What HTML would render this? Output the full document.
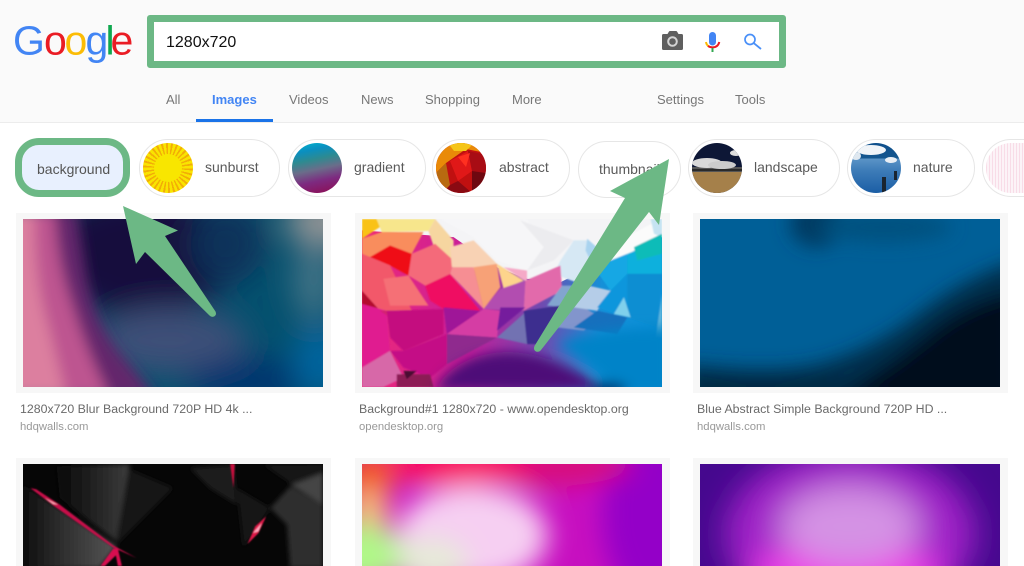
<!DOCTYPE html>
<html><head><meta charset="utf-8"><title>1280x720 - Google Images</title>
<style>
html,body{margin:0;padding:0;background:#fff;height:566px;overflow:hidden;}
body{width:1024px;position:relative;font-family:"Liberation Sans",Arial,sans-serif;}
#root{position:absolute;left:0;top:0;width:1024px;height:566px;overflow:hidden;contain:paint;}
.a{position:absolute;}
#hdr{left:0;top:0;width:1024px;height:122px;background:#fafafa;border-bottom:1px solid #ececec;}
#search{left:147px;top:15px;width:625px;height:39px;border:7px solid #6cb885;border-radius:3px;background:#fff;}
.q{left:166px;top:34px;font-size:16px;line-height:18px;color:#111;}
.n{top:92px;font-size:13px;line-height:16px;color:#777;white-space:nowrap;}
.chip{top:139px;height:56px;border:1px solid #e6e6e6;border-radius:29px;background:#fff;box-sizing:content-box;}
.chip span{position:absolute;top:19px;font-size:14px;line-height:17px;color:#5a5a5a;white-space:nowrap;}
.th{position:absolute;top:3px;width:50px;height:50px;border-radius:50%;overflow:hidden;}
.card{background:#f7f7f7;width:315px;height:180px;}
.t{top:402px;font-size:12.35px;line-height:14px;color:#6a6a6a;white-space:nowrap;}
.s{top:419.5px;font-size:11.3px;line-height:14px;color:#999;white-space:nowrap;}
svg{display:block;}
</style></head><body>
<div id="root">

<div class="a" id="hdr"></div>

<svg class="a" style="left:0;top:0" width="140" height="70">
<g font-family="Liberation Sans, sans-serif" font-size="41">
<text x="13" y="54.5" fill="#4285f4">G</text>
<text x="44" y="54.5" fill="#ea1c24">o</text>
<text x="64.5" y="54.5" fill="#fbbc05">o</text>
<text x="85.5" y="54.5" fill="#4285f4">g</text>
<text x="105.5" y="54.5" fill="#0fa84f">l</text>
<text x="110.5" y="54.5" fill="#ea1c24">e</text>
</g></svg>

<div class="a" id="search"></div>
<div class="a q">1280x720</div>

<svg class="a" style="left:655px;top:25px" width="115" height="32" viewBox="0 0 115 32">
<!-- camera -->
<path d="M8.5 9H12.5L14 6.5Q14.4 6 15 6H21Q21.6 6 22 6.5L23.5 9H26.5Q28 9 28 10.5V23.5Q28 25 26.5 25H8.5Q7 25 7 23.5V10.5Q7 9 8.5 9Z" fill="#5f5f5f"/>
<circle cx="17.5" cy="16.5" r="4.3" fill="#5f5f5f" stroke="#d4d4d4" stroke-width="2"/>
<!-- mic -->
<rect x="54" y="7" width="7" height="13.5" rx="3.5" fill="#4285f4"/>
<path d="M51 17q.4 3 3 4.6" fill="none" stroke="#fbbc05" stroke-width="2"/>
<path d="M53 21q2 1.4 4.5 1.4q5.4 0 6.8-5.4" fill="none" stroke="#ea1c24" stroke-width="2"/>
<rect x="56.5" y="23" width="2" height="4" fill="#34a853"/>
<!-- search -->
<circle cx="95" cy="14.5" r="5" fill="none" stroke="#4a90f8" stroke-width="1.7"/>
<path d="M99 18.3L106 24" fill="none" stroke="#4a90f8" stroke-width="1.8"/>
</svg>

<div class="a n" style="left:166px">All</div>
<div class="a n" style="left:212px;color:#4285f4;font-weight:bold">Images</div>
<div class="a n" style="left:289px">Videos</div>
<div class="a n" style="left:361px">News</div>
<div class="a n" style="left:425px">Shopping</div>
<div class="a n" style="left:512px">More</div>
<div class="a n" style="left:657px">Settings</div>
<div class="a n" style="left:735px">Tools</div>
<div class="a" style="left:196px;top:119px;width:77px;height:3px;background:#1a73e8"></div>

<!-- chips -->
<div class="a" style="left:15px;top:138px;width:101px;height:45px;border:7px solid #6cb885;border-radius:24px;background:#e8f0fe"></div>
<div class="a" style="left:37px;top:161px;font-size:14px;line-height:17px;color:#555">background</div>

<div class="a chip" style="left:139px;width:139px">
 <div class="th" style="left:3px;background:repeating-conic-gradient(#f9e400 0 7deg,#f2ae06 7deg 12deg)"><div style="position:absolute;left:11px;top:11px;width:28px;height:28px;border-radius:50%;background:#f8e600"></div></div>
 <span style="left:65px">sunburst</span></div>
<div class="a chip" style="left:288px;width:136px">
 <div class="th" style="left:3px;background:linear-gradient(168deg,#00b8cf 0%,#0a8fc0 18%,#2e8a90 35%,#6a6d8a 52%,#7d2a80 72%,#8e0b50 100%)"></div>
 <span style="left:65px">gradient</span></div>
<div class="a chip" style="left:432px;width:136px">
 <div class="th" style="left:3px;background:#c01010"><svg width="50" height="50"><polygon points="0,0 50,0 50,10 30,6 10,20 0,30" fill="#e98a08"/><polygon points="12,0 38,0 30,8 18,8" fill="#f5c518"/><polygon points="0,30 10,20 14,42 6,50 0,50" fill="#b86a10"/><polygon points="14,18 32,8 36,28 22,38" fill="#e01818"/><polygon points="32,8 50,12 50,30 36,28" fill="#a80c14"/><polygon points="14,42 22,38 36,50 8,50" fill="#8a0a12"/><polygon points="36,28 50,30 50,50 36,50" fill="#6e0810"/><polygon points="22,14 34,10 30,24" fill="#ff3020"/></svg></div>
 <span style="left:66px">abstract</span></div>
<div class="a chip" style="left:578px;top:141px;height:55px;width:101px"><span style="left:20px;top:19px">thumbnail</span></div>
<div class="a chip" style="left:688px;width:150px">
 <div class="th" style="left:3px;background:#0d1736"><svg width="50" height="50"><rect y="24" width="50" height="6" fill="#555"/><rect y="29" width="50" height="21" fill="#a5804a"/><ellipse cx="15" cy="20" rx="15" ry="5" fill="#d8d8d8"/><ellipse cx="30" cy="22" rx="14" ry="4" fill="#ccc"/><ellipse cx="44" cy="10" rx="6" ry="3" fill="#ddd"/><rect y="26" width="50" height="2" fill="#2a2a2a"/></svg></div>
 <span style="left:65px">landscape</span></div>
<div class="a chip" style="left:847px;width:126px">
 <div class="th" style="left:3px;background:linear-gradient(#0e4f8c 0,#14568f 30%,#5a93c6 32%,#3d7cb8 55%,#1b5ea5 100%)"><svg width="50" height="50"><ellipse cx="20" cy="7" rx="15" ry="5" fill="#f0f4f8"/><ellipse cx="40" cy="17" rx="6" ry="3" fill="#e8eef4"/><ellipse cx="5" cy="13" rx="5" ry="4" fill="#dfe8f0"/><rect x="31" y="34" width="4" height="16" fill="#1a2530"/><rect x="43" y="28" width="3" height="9" fill="#1a2530"/></svg></div>
 <span style="left:65px">nature</span></div>
<div class="a chip" style="left:982px;width:41px;border-right:0;border-radius:29px 0 0 29px">
 <div class="th" style="left:3px;width:38px;border-radius:25px 0 0 25px;background:#fbeef3;background-image:repeating-linear-gradient(90deg,#f8dce7 0 1px,#fcf3f7 1px 3px)"></div></div>

<!-- cards -->
<div class="a card" style="left:16px;top:213px"></div>
<div class="a card" style="left:355px;top:213px"></div>
<div class="a card" style="left:693px;top:213px"></div>
<div class="a card" style="left:16px;top:458px;height:108px"></div>
<div class="a card" style="left:355px;top:458px;height:108px"></div>
<div class="a card" style="left:693px;top:458px;height:108px"></div>

<!-- image 1 -->
<svg class="a" style="left:23px;top:219px" width="300" height="168" viewBox="40 26 898 502" preserveAspectRatio="none">
<defs><filter id="b1" x="-40%" y="-40%" width="180%" height="180%"><feGaussianBlur stdDeviation="46"/></filter>
<filter id="b1s" x="-30%" y="-30%" width="160%" height="160%"><feGaussianBlur stdDeviation="20"/></filter>
<clipPath id="c1"><rect x="40" y="26" width="898" height="502"/></clipPath></defs>
<g clip-path="url(#c1)">
<rect x="40" y="26" width="898" height="502" fill="#04506e"/>
<g filter="url(#b1)">
<ellipse cx="390" cy="130" rx="290" ry="190" fill="#120f3c"/>
<ellipse cx="650" cy="100" rx="110" ry="120" fill="#08305a"/>
<ellipse cx="480" cy="390" rx="230" ry="100" fill="#3e5078"/>
<ellipse cx="720" cy="510" rx="190" ry="70" fill="#03346e"/>
<ellipse cx="930" cy="450" rx="80" ry="110" fill="#01659f"/>
<ellipse cx="950" cy="30" rx="130" ry="70" fill="#979797"/>
<ellipse cx="910" cy="210" rx="60" ry="120" fill="#447587"/>
</g>
<g filter="url(#b1s)">
<path d="M-20 0H200L225 160Q250 340 350 450L440 560H-20Z" fill="#64256c"/>
<path d="M-20 0H135Q140 150 190 290Q230 420 300 560H-20Z" fill="#bd5590"/>
<path d="M-20 0H75Q70 200 120 360L170 560H-20Z" fill="#dc7f9f"/>
</g></g></svg>

<!-- image 2 -->
<svg class="a" style="left:362px;top:219px" width="300" height="168" viewBox="66 26 898 502" preserveAspectRatio="none">
<defs><filter id="b2" x="-5%" y="-5%" width="110%" height="110%"><feGaussianBlur stdDeviation="2.6"/></filter>
<filter id="b2l" x="-20%" y="-20%" width="140%" height="140%"><feGaussianBlur stdDeviation="18"/></filter>
<linearGradient id="g2" x1="0" x2="1" y1="0" y2="0"><stop offset="0" stop-color="#ee2a78"/><stop offset=".35" stop-color="#c81e9a"/><stop offset=".6" stop-color="#6f4bb0"/><stop offset=".8" stop-color="#1590d8"/><stop offset="1" stop-color="#0a90d8"/></linearGradient>
<clipPath id="c2"><rect x="66" y="26" width="898" height="502"/></clipPath></defs>
<g clip-path="url(#c2)">
<rect x="66" y="26" width="898" height="502" fill="#f4f4f6"/>
<polygon points="66,60 340,80 470,170 560,205 660,215 760,165 964,80 964,528 66,528" fill="url(#g2)"/>
<g filter="url(#b2)">
<polygon points="300,26 560,26 610,110 560,180 470,150 400,80" fill="#f6f6f8"/>
<polygon points="540,30 610,110 560,180 640,150 700,90" fill="#ececef"/>
<polygon points="700,90 740,90 780,120 720,220 640,190 660,150" fill="#d6e8f4"/>
<polygon points="780,120 960,26 960,70 820,160" fill="#fbfbfb"/>
<polygon points="740,85 780,120 750,150 735,120" fill="#a9d3ef"/>
<polygon points="930,26 964,26 964,80 940,70" fill="#c5e3f2"/>
<polygon points="66,26 110,26 120,50 66,85" fill="#f9c213"/>
<polygon points="110,26 285,26 265,62 125,65" fill="#f7e68c"/>
<polygon points="285,26 340,90 340,150 285,120 265,62" fill="#f6d6a0"/>
<polygon points="66,85 125,65 250,65 215,130 150,105 90,140 66,130" fill="#f98d5d"/>
<polygon points="90,140 150,105 215,130 205,195 150,165" fill="#ef1017"/>
<polygon points="66,130 90,140 150,165 215,300 120,300 66,240" fill="#f2596a"/>
<polygon points="130,205 205,195 265,285 150,285" fill="#f56f76"/>
<polygon points="66,240 120,300 66,280" fill="#b40e2e"/>
<polygon points="215,130 285,100 340,150 330,190 255,225 205,195" fill="#f46a7a"/>
<polygon points="255,225 330,190 420,300 310,295 270,270" fill="#ef0f62"/>
<polygon points="330,110 400,90 470,160 420,180 335,170" fill="#f8d2b4"/>
<polygon points="335,170 400,170 430,295 330,190" fill="#f68e93"/>
<polygon points="400,170 470,160 480,230 430,295" fill="#f7a177"/>
<polygon points="470,160 550,210 490,235" fill="#fdd48c"/>
<polygon points="490,170 560,180 560,215" fill="#f5a9c7"/>
<polygon points="480,235 555,210 550,300 430,295" fill="#b24eb0"/>
<polygon points="555,210 660,165 665,240 550,300" fill="#e26aab"/>
<polygon points="665,225 720,225 700,290 620,285" fill="#82a5cf"/>
<polygon points="66,280 140,300 150,420 66,470" fill="#e01f90"/>
<polygon points="120,300 140,300 215,300 150,320" fill="#d3206f"/>
<polygon points="140,300 310,295 310,370 190,420 150,380" fill="#c4107f"/>
<polygon points="310,290 420,300 320,370" fill="#9f1298"/>
<polygon points="320,370 430,295 480,300 470,380" fill="#d53da4"/>
<polygon points="320,370 470,380 320,460" fill="#8f2c8e"/>
<polygon points="470,380 560,300 560,400" fill="#7272b2"/>
<polygon points="480,290 555,290 470,360" fill="#741b9d"/>
<polygon points="550,300 660,285 600,400 560,400" fill="#3c2f8f"/>
<polygon points="66,470 150,420 190,500 130,528 66,528" fill="#d767a8"/>
<polygon points="150,420 190,420 320,370 320,460 270,500 190,470" fill="#c40d86"/>
<polygon points="170,490 270,490 280,528 170,528" fill="#8c1a55"/>
<polygon points="190,480 230,480 200,505" fill="#4a1030"/>
<polygon points="660,280 730,290 780,320 730,360 650,350" fill="#8295cc"/>
<polygon points="720,220 810,240 770,300 700,290" fill="#b5cde8"/>
<polygon points="760,170 860,130 860,220 810,240" fill="#12a7e4"/>
<polygon points="860,130 964,90 964,190 860,190" fill="#0bb0dd"/>
<polygon points="880,110 964,70 964,130 890,150" fill="#0cbcb8"/>
<polygon points="860,190 964,190 950,350 860,320" fill="#0c8ed2"/>
<polygon points="810,240 860,190 860,320 770,290" fill="#0a96dc"/>
<polygon points="850,260 870,320 820,310" fill="#7fd0ec"/>
<polygon points="770,300 860,320 830,370 700,350" fill="#1470bd"/>
<polygon points="964,250 964,380 945,380" fill="#5fb5dc"/>
</g>
<g filter="url(#b2l)">
<path d="M280 540Q340 440 470 425Q620 410 800 540Z" fill="#4d0a78"/>
<path d="M650 400Q780 350 990 350V550H830Q750 450 650 400Z" fill="#0683c8"/>
<ellipse cx="800" cy="535" rx="60" ry="20" fill="#062a6a"/>
</g></g></svg>

<!-- image 3 -->
<svg class="a" style="left:700px;top:219px" width="300" height="168" viewBox="46 26 899 502" preserveAspectRatio="none">
<defs><filter id="b3" x="-30%" y="-30%" width="160%" height="160%"><feGaussianBlur stdDeviation="28"/></filter>
<clipPath id="c3"><rect x="46" y="26" width="899" height="502"/></clipPath></defs>
<g clip-path="url(#c3)"><rect x="46" y="26" width="899" height="502" fill="#005f97"/>
<g filter="url(#b3)">
<ellipse cx="395" cy="40" rx="80" ry="70" fill="#023a62"/>
<ellipse cx="600" cy="50" rx="200" ry="45" fill="#02517f"/>
<path d="M0 460Q260 490 400 460Q560 420 700 310Q840 200 1000 150V600H0Z" fill="#012f4c"/>
<path d="M440 570Q620 460 740 360Q850 270 1000 240V600Z" fill="#010f1c"/>
<path d="M0 510H460V570H0Z" fill="#012740"/>
</g></g></svg>

<!-- image 4 -->
<svg class="a" style="left:23px;top:464px" width="300" height="102" viewBox="40 28 898 306" preserveAspectRatio="none">
<defs><filter id="b4" x="-20%" y="-20%" width="140%" height="140%"><feGaussianBlur stdDeviation="7"/></filter><filter id="b4r" x="-20%" y="-20%" width="140%" height="140%"><feGaussianBlur stdDeviation="2"/></filter>
<linearGradient id="g4a" x1="0" x2="1" y1="0" y2="0"><stop offset="0" stop-color="#070707"/><stop offset="1" stop-color="#3c3c3c"/></linearGradient>
<linearGradient id="g4b" x1="0" x2="1" y1="0" y2="0"><stop offset="0" stop-color="#0c0c0c"/><stop offset=".3" stop-color="#262626"/><stop offset="1" stop-color="#555"/></linearGradient>
<clipPath id="c4"><rect x="40" y="28" width="898" height="306"/></clipPath></defs>
<g clip-path="url(#c4)"><rect x="40" y="28" width="898" height="306" fill="#060606"/>
<g filter="url(#b4)">
<polygon points="140,35 360,28 320,260 240,200 150,130" fill="url(#g4a)"/>
<polygon points="360,45 490,100 320,270" fill="#161616"/>
<polygon points="40,90 320,275 270,340 40,340" fill="url(#g4b)"/>
<polygon points="540,40 670,30 680,150 600,100" fill="#1e1e1e"/>
<polygon points="760,30 938,28 938,55 840,85" fill="#181818"/>
<polygon points="840,90 938,55 938,150" fill="#444"/>
<polygon points="780,160 840,95 938,150 938,340 840,340 830,210" fill="#2e2e2e"/>
<polygon points="680,100 780,160 700,280" fill="#121212"/>
</g>
<g filter="url(#b4r)">
<polygon points="62,100 80,104 150,150 310,272 380,310 310,279 130,152" fill="#c80e48"/>
<polygon points="105,130 145,150 130,148" fill="#ffb0c0"/>
<polygon points="660,28 674,28 670,100" fill="#c8103c"/>
<polygon points="712,268 735,215 768,185 745,235" fill="#e01848"/>
<polygon points="728,235 755,205 745,230" fill="#ffa8c0"/>
<polygon points="310,282 324,282 336,334 324,334 318,302 285,334 272,334" fill="#d81050"/>
</g></g></svg>

<!-- image 5 -->
<svg class="a" style="left:362px;top:464px" width="300" height="102" viewBox="0 0 300 102" preserveAspectRatio="none">
<defs><filter id="b5" x="-40%" y="-40%" width="180%" height="180%"><feGaussianBlur stdDeviation="13"/></filter>
<clipPath id="c5"><rect width="300" height="102"/></clipPath></defs>
<g clip-path="url(#c5)"><rect width="300" height="102" fill="#c70fc0"/>
<g filter="url(#b5)">
<ellipse cx="290" cy="50" rx="50" ry="90" fill="#9400c8"/>
<ellipse cx="190" cy="0" rx="80" ry="22" fill="#d8087c"/>
<ellipse cx="90" cy="-4" rx="80" ry="24" fill="#fa0860"/>
<ellipse cx="6" cy="14" rx="24" ry="28" fill="#f2561e"/>
<ellipse cx="6" cy="46" rx="22" ry="22" fill="#f4b878"/>
<ellipse cx="110" cy="72" rx="76" ry="50" fill="#f6cff2"/>
<ellipse cx="70" cy="100" rx="36" ry="26" fill="#e6ead8"/>
<ellipse cx="2" cy="92" rx="38" ry="34" fill="#b0f888"/>
</g></g></svg>

<!-- image 6 -->
<svg class="a" style="left:700px;top:464px" width="300" height="102" viewBox="0 0 300 102" preserveAspectRatio="none">
<defs><filter id="b6" x="-40%" y="-40%" width="180%" height="180%"><feGaussianBlur stdDeviation="16"/></filter>
<clipPath id="c6"><rect width="300" height="102"/></clipPath></defs>
<g clip-path="url(#c6)"><rect width="300" height="102" fill="#45088e"/>
<g filter="url(#b6)">
<ellipse cx="150" cy="70" rx="125" ry="85" fill="#a124c8"/>
<ellipse cx="145" cy="115" rx="100" ry="34" fill="#ee3ee8"/>
<ellipse cx="150" cy="62" rx="70" ry="40" fill="#d492e4"/>
</g></g></svg>

<!-- captions -->
<div class="a t" style="left:20px">1280x720 Blur Background 720P HD 4k ...</div>
<div class="a s" style="left:20px">hdqwalls.com</div>
<div class="a t" style="left:359px">Background#1 1280x720 - www.opendesktop.org</div>
<div class="a s" style="left:359px">opendesktop.org</div>
<div class="a t" style="left:697px">Blue Abstract Simple Background 720P HD ...</div>
<div class="a s" style="left:697px">hdqwalls.com</div>

<!-- arrows -->
<svg class="a" style="left:0;top:0" width="1024" height="566">
<path d="M123 206L178 230.5L165 236L215.5 311.5Q217 315 214 316.5Q211.5 317.5 209.5 315.5L145 252L136 264Z" fill="#6cb885"/>
<path d="M669 159L610 191L625 198L534.5 346Q533 350 536 351.5Q539 352.5 541 350L649 212L659 225Z" fill="#6cb885"/>
</svg>
</div>
</body></html>
